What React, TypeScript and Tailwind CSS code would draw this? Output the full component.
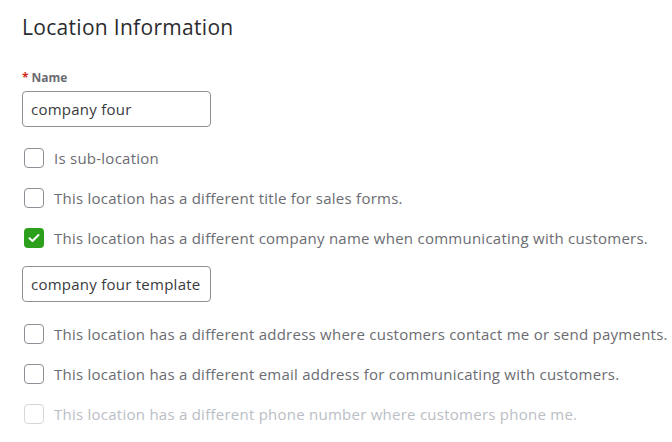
import React from "react";

function Check({ checked, disabled }: { checked?: boolean; disabled?: boolean }) {
  if (checked) {
    return (
      <span className="flex h-5 w-5 shrink-0 items-center justify-center rounded-[4px] bg-[#2ca01c]">
        <svg width="12" height="10" viewBox="0 0 12 10" fill="none">
          <path d="M1.5 5.2 L4.5 8 L10.5 2" stroke="white" strokeWidth="2" strokeLinecap="round" strokeLinejoin="round" />
        </svg>
      </span>
    );
  }
  return (
    <span
      className={
        "h-5 w-5 shrink-0 rounded-[4px] border bg-white " +
        (disabled ? "border-[#d4d7dc]" : "border-[#8d9096]")
      }
    />
  );
}

function Row({ label, checked, disabled }: { label: string; checked?: boolean; disabled?: boolean }) {
  return (
    <div className="flex h-5 items-center gap-[10px] pl-[2px]">
      <Check checked={checked} disabled={disabled} />
      <span
        className={
          "whitespace-nowrap text-[15px] tracking-[0.25px] " +
          (disabled ? "text-[#babec5]" : "text-[#6b6c72]")
        }
      >
        {label}
      </span>
    </div>
  );
}

export default function App() {
  return (
    <div
      className="h-[442px] w-[672px] overflow-hidden bg-white pl-[22px] pt-[13px]"
      style={{ fontFamily: "'Open Sans', 'Noto Sans', sans-serif" }}
    >
      <h1 className="text-[21px] font-medium leading-[28px] tracking-[0.3px] text-[#2b2c2f]">Location Information</h1>
      <div className="mt-[29px] flex items-center text-[12px] font-bold leading-4 text-[#6b6c72]">
        <span className="mr-[3px] text-[#d52b1e]">*</span>Name
      </div>
      <div className="mt-[5px] flex h-9 w-[189px] items-center rounded-[4px] border border-[#8d9096] px-2 text-[15px] tracking-[0.25px] text-[#393a3d]">
        company four
      </div>
      <div className="mt-[21px] flex flex-col gap-5">
        <Row label="Is sub-location" />
        <Row label="This location has a different title for sales forms." />
        <Row label="This location has a different company name when communicating with customers." checked />
      </div>
      <div className="mt-[18px] flex h-9 w-[189px] items-center rounded-[4px] border border-[#8d9096] px-2 text-[15px] tracking-[0.25px] text-[#393a3d]">
        company four template
      </div>
      <div className="mt-[22px] flex flex-col gap-5">
        <Row label="This location has a different address where customers contact me or send payments." />
        <Row label="This location has a different email address for communicating with customers." />
        <Row label="This location has a different phone number where customers phone me." disabled />
      </div>
    </div>
  );
}
